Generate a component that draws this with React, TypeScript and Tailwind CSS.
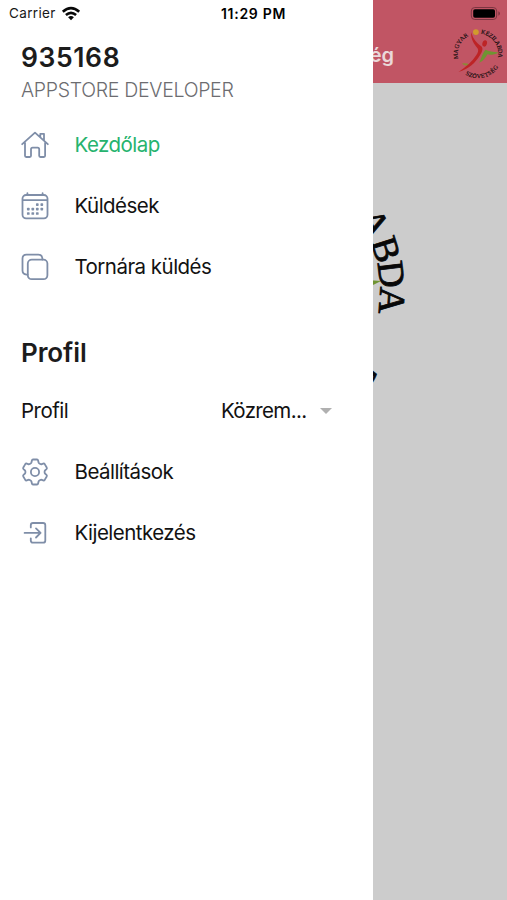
import type { ReactNode } from "react";

type Glyph = [string, number];

const outerGlyphs: Glyph[] = [
  ["M", 174], ["A", 187], ["G", 200], ["Y", 213], ["A", 224], ["R", 236],
  ["K", -76], ["É", -65], ["Z", -55], ["I", -47], ["L", -40], ["A", -29.5],
  ["B", -17.5], ["D", -7], ["A", 4],
];

const innerGlyphs: Glyph[] = [
  ["S", 118], ["Z", 109], ["Ö", 99], ["V", 88], ["E", 78], ["T", 68], ["S", 59], ["É", 49], ["G", 38],
];

function Crest({ className }: { className: string }) {
  return (
    <svg viewBox="0 0 320 320" className={className} aria-hidden="true">
      <g
        fontFamily="'Liberation Serif', serif"
        fontSize="37"
        textAnchor="middle"
        fill="#080808"
        stroke="#080808"
        strokeWidth="0.8"
      >
        {outerGlyphs.map(([ch, a], i) => (
          <text key={i} transform={`translate(160 160) rotate(${a + 90}) translate(0 -126)`}>{ch}</text>
        ))}
        {innerGlyphs.map(([ch, a], i) => (
          <text key={i} transform={`translate(160 160) rotate(${a - 90}) translate(0 149)`}>{ch}</text>
        ))}
      </g>
      <path d="M168 214 C182 178 190 152 206 134 C226 144 250 148 287 150 C264 162 238 168 218 162 C208 182 196 200 168 214Z" fill="#6f9432" />
      <path d="M62 218 C80 216 94 218 110 226 C94 234 76 232 62 218Z" fill="#8a8a35" />
      <path d="M118 26 C132 72 152 92 180 112 C194 124 186 146 174 164 C144 216 100 252 40 270 C88 240 124 206 150 166 C160 150 165 138 158 126 C136 100 114 66 118 26Z" fill="#bd2426" />
      <ellipse cx="201" cy="95" rx="14" ry="20" transform="rotate(15 201 95)" fill="#bd2426" />
      <circle cx="147" cy="25" r="18" fill="#d19a2c" />
    </svg>
  );
}

function LineIcon({ children }: { children: ReactNode }) {
  return (
    <svg
      viewBox="0 0 28 28"
      className="size-7 shrink-0"
      fill="none"
      stroke="#7f8ea8"
      strokeWidth="1.8"
      strokeLinecap="round"
      strokeLinejoin="round"
      aria-hidden="true"
    >
      {children}
    </svg>
  );
}

function HomeIcon() {
  return (
    <LineIcon>
      <path d="M1.2 13.2 14 1.6 26.8 13.2M4 11.4V24.8Q4 26 5.2 26H8.8Q10 26 10 24.8V18.2Q10 16.6 11.6 16.6H16.6Q18.2 16.6 18.2 18.2V24.8Q18.2 26 19.4 26H22.9Q24.1 26 24.1 24.8V11.4M19.3 5.8V2.8H23V9.2" />
    </LineIcon>
  );
}

const calendarDots: [number, number][] = [
  [16.3, 12.7], [20.8, 12.7],
  [7.3, 17.1], [11.8, 17.1], [16.3, 17.1], [20.8, 17.1],
  [7.3, 21.5], [11.8, 21.5], [16.3, 21.5],
];

function CalendarIcon() {
  return (
    <LineIcon>
      <rect x="1.5" y="3" width="25" height="23.3" rx="3.6" />
      <path d="M1.8 8.1H26.2M6.4 1.2V3M21.6 1.2V3" />
      <g fill="#7f8ea8" stroke="none">
        {calendarDots.map(([x, y]) => (
          <rect key={`${x}-${y}`} x={x - 1.35} y={y - 1.35} width="2.7" height="2.7" rx="0.7" />
        ))}
      </g>
    </LineIcon>
  );
}

function CopyIcon() {
  return (
    <LineIcon>
      <rect x="6.8" y="6.6" width="19.6" height="19.6" rx="4" />
      <path d="M6.6 21.6H5.5Q1.5 21.2 1.5 17.6V5.6Q1.5 1.6 5.5 1.6H17.4Q21 1.6 21.4 5.4V6.6" />
    </LineIcon>
  );
}

function GearIcon() {
  return (
    <LineIcon>
      <circle cx="14" cy="14" r="4.1" />
      <path d="M12 1.5H16Q16.9 1.5 17.1 2.5L17.5 4.3Q17.7 5.1 18.4 5.5L19.3 6Q20 6.4 20.8 6.1L22.2 5.6Q23.2 5.3 23.7 6.1L25.7 9.5Q26.2 10.4 25.5 11.1L24.2 12.2Q23.6 12.7 23.6 13.5V14.5Q23.6 15.3 24.2 15.8L25.5 16.9Q26.2 17.6 25.7 18.5L23.7 21.9Q23.2 22.7 22.2 22.4L20.8 21.9Q20 21.6 19.3 22L18.4 22.5Q17.7 22.9 17.5 23.7L17.1 25.5Q16.9 26.5 16 26.5H12Q11.1 26.5 10.9 25.5L10.5 23.7Q10.3 22.9 9.6 22.5L8.7 22Q8 21.6 7.2 21.9L5.8 22.4Q4.8 22.7 4.3 21.9L2.3 18.5Q1.8 17.6 2.5 16.9L3.8 15.8Q4.4 15.3 4.4 14.5V13.5Q4.4 12.7 3.8 12.2L2.5 11.1Q1.8 10.4 2.3 9.5L4.3 6.1Q4.8 5.3 5.8 5.6L7.2 6.1Q8 6.4 8.7 6L9.6 5.5Q10.3 5.1 10.5 4.3L10.9 2.5Q11.1 1.5 12 1.5Z" />
    </LineIcon>
  );
}

function LogoutIcon() {
  return (
    <LineIcon>
      <path d="M9.8 8.4V6.2Q9.8 4 12 4H22Q24.3 4 24.3 6.3V21.4Q24.3 23.7 22 23.7H12Q9.8 23.7 9.8 21.5V19.3M3.6 13.9H19.3M15 9.4 19.6 13.9 15 18.5" />
    </LineIcon>
  );
}

function MenuItem({ icon, label, labelClass }: { icon: ReactNode; label: string; labelClass: string }) {
  return (
    <a className="flex h-[61px] items-center gap-[25.5px]">
      {icon}
      <span className={`text-[20.5px] leading-7 tracking-[-0.53px] ${labelClass}`}>{label}</span>
    </a>
  );
}

function StatusBar() {
  return (
    <div className="absolute inset-x-0 top-0 z-20 flex h-[27px] items-center pl-[9px] text-[13.5px] text-[#181818]">
      <span className="w-[52px] tracking-[0.35px]">Carrier</span>
      <svg viewBox="0 0 20 15" className="h-[15px] w-5" aria-hidden="true">
        <g fill="none" stroke="#080808" strokeWidth="2.6">
          <path d="M1.8 5.8Q10 -1.6 18.2 5.8" />
          <path d="M4.9 9Q10 4.6 15.1 9" />
        </g>
        <path d="M7.1 11.2Q10 8.9 12.9 11.2L10 14.2Z" fill="#080808" />
      </svg>
      <span className="ml-[140px] grow text-[14px] font-semibold tracking-[0.7px] text-black">11:29 PM</span>
      <svg viewBox="0 0 31 14" className="mr-1.5 h-3.5 w-[31px]" aria-hidden="true">
        <rect x="1.3" y="0.5" width="25.4" height="12" rx="3.5" fill="none" stroke="#7d3541" />
        <rect x="3.2" y="2.2" width="21.8" height="8.6" rx="1.8" fill="#000" />
        <path d="M28.4 4.3V8.7Q30 8 30 6.5T28.4 4.3Z" fill="#7d3541" />
      </svg>
    </div>
  );
}

export default function App() {
  return (
    <div className="relative h-[900px] w-[507px] overflow-hidden bg-[#cccccc] font-['Inter','Liberation_Sans',sans-serif]">
      <div className="flex h-full flex-col">
        <header className="flex h-[83px] shrink-0 items-end justify-end bg-[#c15564] pr-[3px] pb-[3px]">
          <div className="mr-[58px] mb-[13px] text-[20px] leading-6 font-semibold whitespace-nowrap text-[#ead8d9]">
            Magyar Kézilabda Szövetség
          </div>
          <Crest className="size-[52px]" />
        </header>
        <main className="flex justify-center pt-12">
          <Crest className="size-80" />
        </main>
      </div>

      <aside className="absolute inset-y-0 left-0 z-10 w-[373px] bg-white pt-[41px] pl-[21px]">
        <h1 className="h-8 text-[26.5px] leading-8 font-semibold tracking-[0.6px] text-[#1c1c1c]">935168</h1>
        <p className="mt-[3px] h-[27px] text-[19.5px] leading-[28px] font-light tracking-[-0.3px] whitespace-nowrap text-[#6c6c70]">
          APPSTORE DEVELOPER
        </p>
        <nav className="mt-[11px] flex flex-col">
          <MenuItem icon={<HomeIcon />} label="Kezdőlap" labelClass="text-[#26b36e]" />
          <MenuItem icon={<CalendarIcon />} label="Küldések" labelClass="text-[#121212]" />
          <MenuItem icon={<CopyIcon />} label="Tornára küldés" labelClass="text-[#121212]" />
        </nav>
        <h2 className="mt-10 h-8 text-[26px] leading-8 font-semibold tracking-[-0.1px] text-[#1c1c1c]">Profil</h2>
        <div className="mt-3 flex h-[60px] items-center text-[20.5px] tracking-[-0.53px] text-[#121212]">
          <span className="w-[200px]">Profil</span>
          <span className="w-[99px] tracking-[-0.65px]">Közrem...</span>
          <span className="size-0 border-x-[6px] border-t-[6px] border-x-transparent border-t-[#b0b0b0]" />
        </div>
        <nav className="flex flex-col">
          <MenuItem icon={<GearIcon />} label="Beállítások" labelClass="text-[#121212]" />
          <MenuItem icon={<LogoutIcon />} label="Kijelentkezés" labelClass="text-[#121212]" />
        </nav>
      </aside>

      <StatusBar />
    </div>
  );
}
